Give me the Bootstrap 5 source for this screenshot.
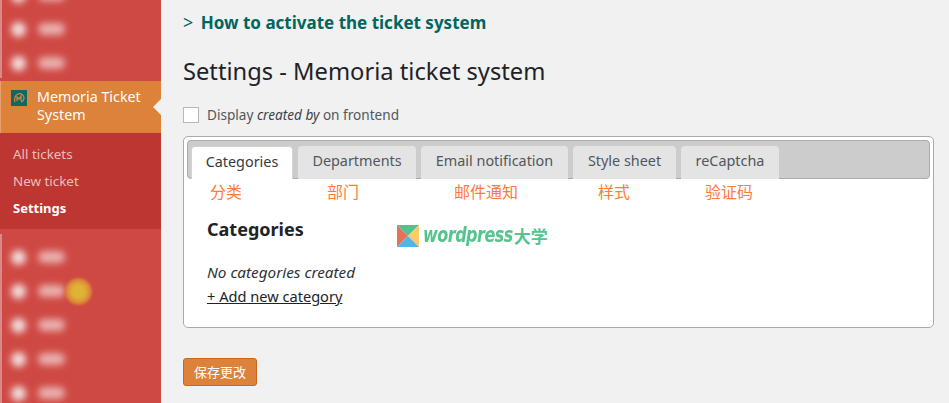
<!DOCTYPE html>
<html lang="en">
<head>
<meta charset="utf-8">
<title>Settings</title>
<link href="https://cdn.jsdelivr.net/npm/bootstrap@5.3.0/dist/css/bootstrap.min.css" rel="stylesheet">
<style>
html,body{height:403px;overflow:hidden}
body{background:#f1f1f1;font-family:"Noto Sans","Open Sans","Noto Sans CJK SC",sans-serif;color:#1d2327;font-size:13px}
.shell{height:403px}
.side{width:161px;flex:none;background:#cf4944;overflow:hidden}
.blurzone{height:78px;border-left:2px solid #d98a88;overflow:hidden}
.spacer-a{height:3px}
.blurzone.low{height:169px;padding-top:6px}
.spacer-b{height:5px}
.top-blur{margin-top:-22px}
.bitem{height:34px;gap:12px;padding-left:9px;filter:blur(3.5px)}
.dot{width:15px;height:15px;border-radius:50%;background:#f2dcdc;flex:none}
.bar{width:27px;height:12px;background:#eab0ae;border-radius:6px}
.current{background:#dd823b;color:#fff;height:52px;font-size:14.3px;line-height:18px;padding:7px 0 0 10px;position:relative;border-left:1px solid #e8a070}
.current span{display:block;padding-left:10px}
.micon{width:16px;height:16px;background:#0a6b66;flex:none;margin-top:2px}
.current::after{content:"";position:absolute;right:0;top:18px;border:8px solid transparent;border-right-color:#f1f1f1;border-left:0}
.submenu{background:#be3631;height:96px;padding:8px 0 0 13px;font-size:13.4px;line-height:27px;color:#efbdbb}
.submenu div.on{color:#fff;font-weight:700;font-size:13px}
.gleam{width:27px;height:27px;border-radius:50%;background:radial-gradient(circle,#e0b337 0 32%,#dc9136 55%,#d56a3e 78%,transparent 100%);flex:none;filter:blur(.8px)}
.pane{flex:1;padding:0 15px 0 22px;min-width:0}
.howto{font-size:17px;line-height:24px;font-weight:700;padding-top:10px;color:#00665f}
.howto i{font-style:normal;font-weight:400;margin-right:3px;font-size:18px}
.ptitle{font-size:23.7px;line-height:30px;font-weight:400;margin:21px 0 0;color:#1d2327}
.tick{width:16px;height:16px;border:1px solid #b4b9be;background:#fff;flex:none}
.optline{margin-top:20px;gap:8px;font-size:13.6px;line-height:18px;color:#50575e}
.optline em{color:#3c434a}
.frame{margin-top:12px;height:192px;background:#fff;border:1px solid #aaa;border-radius:5px;padding:3px}
.tabbar{height:39px;background:#ccc;border:1px solid #aaa;border-radius:4px;padding:5px 3px 0;gap:5px}
.tabx{background:#e4e4e4;color:#50575e;height:33px;border-radius:4px 4px 0 0;font-size:14.4px;line-height:30px;text-align:center;flex:none}
.tabx.on{background:#fff;color:#343a40;border:1px solid #d3d3d3;border-bottom:0}
.zh{color:#ff7a3d;font-size:16px;line-height:24px;height:26px;font-family:"Noto Sans CJK SC",sans-serif}
.zh span{flex:none}
.boxhead{gap:92px;padding:11px 0 0 20px;height:55px}
.boxhead h2{font-size:18px;line-height:26px;font-weight:700;margin:0;color:#1d2327;width:98px;flex:none}
.wp{gap:4px;color:#56c490;margin-top:9px}
.wpname{font-size:16px;line-height:22px;font-weight:700;font-style:italic;letter-spacing:-.5px;font-family:"DejaVu Sans",sans-serif;transform:scaleY(1.3)}
.wpzh{font-size:17px;line-height:22px;font-weight:700;font-family:"Noto Sans CJK SC",sans-serif;margin-left:-3px}
.nocat{padding-left:20px;font-size:15.3px;line-height:24px;color:#2c3338}
.addcat{padding-left:20px;font-size:14.6px;line-height:24px}
.addcat a{color:#1d2327;text-decoration:underline}
.savebtn{margin-top:30px;width:74px;height:28px;padding:0;background:#dd823b;border:1px solid #c36822;color:#fff;font-size:13px;line-height:26px;border-radius:3px;font-family:"Noto Sans CJK SC",sans-serif}
.savebtn:hover{background:#dd823b;color:#fff;border-color:#c36822}
</style>
</head>
<body>
<div class="shell d-flex">
  <nav class="side">
    <div class="blurzone">
      <div class="top-blur">
        <div class="bitem d-flex align-items-center"><div class="dot"></div><div class="bar"></div></div>
        <div class="bitem d-flex align-items-center"><div class="dot"></div><div class="bar"></div></div>
        <div class="bitem d-flex align-items-center"><div class="dot"></div><div class="bar"></div></div>
      </div>
    </div>
    <div class="spacer-a"></div>
    <div class="current d-flex">
      <svg class="micon" viewBox="0 0 16 16"><path d="M4 12c-1-3 0-7 3-8 3-1 6 1 6 4 0 2-2 4-3 4M6 11V7l2 2 2-3v5" fill="none" stroke="#dd823b" stroke-width="1.2"/></svg>
      <span>Memoria Ticket System</span>
    </div>
    <div class="submenu">
      <div>All tickets</div>
      <div>New ticket</div>
      <div class="on">Settings</div>
    </div>
    <div class="spacer-b"></div>
    <div class="blurzone low">
      <div class="bitem d-flex align-items-center"><div class="dot"></div><div class="bar"></div></div>
      <div class="d-flex align-items-center">
        <div class="bitem d-flex align-items-center"><div class="dot"></div><div class="bar"></div></div>
        <div class="gleam"></div>
      </div>
      <div class="bitem d-flex align-items-center"><div class="dot"></div><div class="bar"></div></div>
      <div class="bitem d-flex align-items-center"><div class="dot"></div><div class="bar"></div></div>
      <div class="bitem d-flex align-items-center"><div class="dot"></div><div class="bar"></div></div>
    </div>
  </nav>
  <main class="pane">
    <div class="howto"><i>&gt;</i> How to activate the ticket system</div>
    <h1 class="ptitle">Settings - Memoria ticket system</h1>
    <div class="optline d-flex align-items-center"><span class="tick"></span><span>Display <em>created by</em> on frontend</span></div>
    <div class="frame">
      <div class="tabbar d-flex">
        <div class="tabx on" style="width:102px">Categories</div>
        <div class="tabx" style="width:118px">Departments</div>
        <div class="tabx" style="width:147px">Email notification</div>
        <div class="tabx" style="width:103px">Style sheet</div>
        <div class="tabx" style="width:98px">reCaptcha</div>
      </div>
      <div class="zh d-flex">
        <span style="margin-left:23px;width:117px">分类</span>
        <span style="width:127px">部门</span>
        <span style="width:144px">邮件通知</span>
        <span style="width:107px">样式</span>
        <span>验证码</span>
      </div>
      <div class="boxhead d-flex align-items-start">
        <h2>Categories</h2>
        <div class="wp d-flex align-items-center">
          <svg width="22" height="22" viewBox="0 0 22 22"><polygon points="0,0 22,0 11,11" fill="#54c08e"/><polygon points="0,0 11,11 0,22" fill="#e0735a"/><polygon points="22,0 22,22 11,11" fill="#fdc969"/><polygon points="0,22 22,22 11,11" fill="#4db5e8"/></svg>
          <span class="wpname">wordpress</span><span class="wpzh">大学</span>
        </div>
      </div>
      <div class="nocat"><em>No categories created</em></div>
      <div class="addcat"><a href="#">+ Add new category</a></div>
    </div>
    <button class="btn savebtn" type="button">保存更改</button>
  </main>
</div>
</body>
</html>
